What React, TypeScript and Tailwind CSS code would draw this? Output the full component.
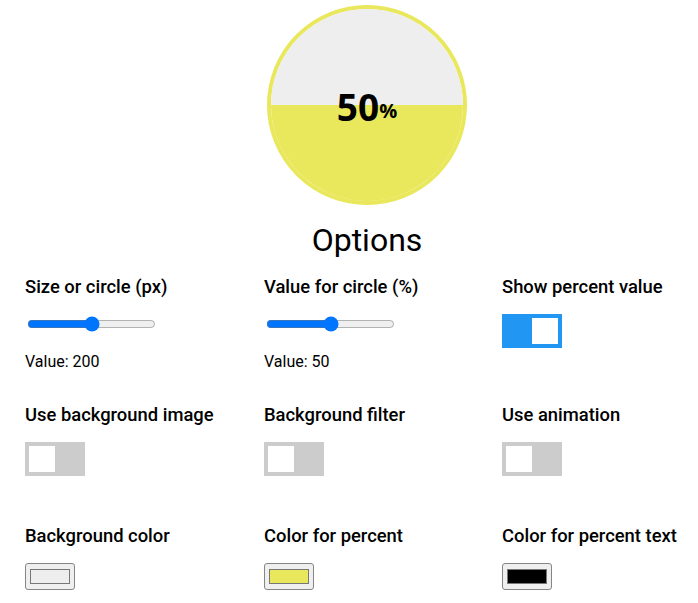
import { useState } from 'react';

function Switch({ on }: { on: boolean }) {
  return (
    <div
      className={`flex h-[34px] w-[60px] p-[4px] ${on ? 'justify-end bg-[#2196f3]' : 'justify-start bg-[#cccccc]'}`}
    >
      <div className="h-[26px] w-[26px] bg-white" />
    </div>
  );
}

function ColorPicker({ color }: { color: string }) {
  return (
    <input
      type="color"
      defaultValue={color}
      className="mt-[15px] block h-[27px] w-[50px] cursor-pointer rounded-[3px] border border-[#858585] bg-[#efefef] px-[2px] py-[1px]"
    />
  );
}

const label = 'text-[18.4px] font-medium leading-[24px]';

export default function App() {
  const [size, setSize] = useState(200);
  const [value, setValue] = useState(50);

  return (
    <div className="w-full overflow-hidden bg-white">
      <div className="w-[734px] text-black" style={{ fontFamily: 'Roboto, sans-serif' }}>
        <div className="flex justify-center pt-[5px]">
          <div className="relative h-[200px] w-[200px] overflow-hidden rounded-full border-4 border-[#e9e85c]">
            <div className="h-1/2 bg-[#eeeeee]" />
            <div className="h-1/2 bg-[#e9e85c]" />
            <div
              className="absolute inset-0 flex items-center justify-center pt-[2px] font-bold"
              style={{ fontFamily: '"Open Sans", sans-serif' }}
            >
              <span className="text-[37px] leading-none">{value}</span>
              <span className="mt-[10px] text-[20px] leading-none">%</span>
            </div>
          </div>
        </div>

        <h2 className="mt-[15px] text-center text-[32px] leading-[40px]">Options</h2>

        <div className="mt-[15px] grid grid-cols-[239px_238px_238px] pl-[25px]">
          <div className="h-[128px]">
            <div className={label}>Size or circle (px)</div>
            <input
              type="range"
              min={0}
              max={400}
              value={size}
              onChange={(e) => setSize(Number(e.target.value))}
              className="mt-[17px] ml-[2px] block"
            />
            <div className="mt-[20px] text-[16px] leading-[20px]">Value: {size}</div>
          </div>
          <div>
            <div className={label}>Value for circle (%)</div>
            <input
              type="range"
              min={0}
              max={100}
              value={value}
              onChange={(e) => setValue(Number(e.target.value))}
              className="mt-[17px] ml-[2px] block"
            />
            <div className="mt-[20px] text-[16px] leading-[20px]">Value: {value}</div>
          </div>
          <div>
            <div className={label}>Show percent value</div>
            <div className="mt-[15px]">
              <Switch on />
            </div>
          </div>

          <div className="h-[121px]">
            <div className={label}>Use background image</div>
            <div className="mt-[15px]">
              <Switch on={false} />
            </div>
          </div>
          <div>
            <div className={label}>Background filter</div>
            <div className="mt-[15px]">
              <Switch on={false} />
            </div>
          </div>
          <div>
            <div className={label}>Use animation</div>
            <div className="mt-[15px]">
              <Switch on={false} />
            </div>
          </div>

          <div>
            <div className={label}>Background color</div>
            <ColorPicker color="#eeeeee" />
          </div>
          <div>
            <div className={label}>Color for percent</div>
            <ColorPicker color="#e9e85c" />
          </div>
          <div>
            <div className={label}>Color for percent text</div>
            <ColorPicker color="#000000" />
          </div>
        </div>
      </div>
    </div>
  );
}
